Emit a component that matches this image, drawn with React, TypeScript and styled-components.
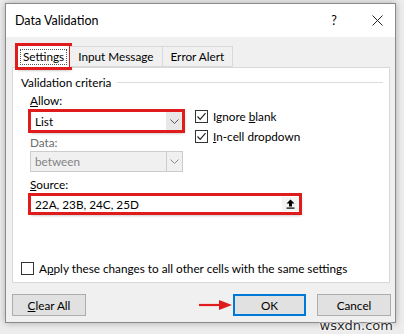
import React from 'react'
import styled, { createGlobalStyle, css } from 'styled-components'

const GlobalStyle = createGlobalStyle`
  html, body {
    margin: 0;
    padding: 0;
    background: #ededed;
  }
  body {
    font-family: Lato, "Noto Sans", sans-serif;
    font-size: 11.75px;
    color: #000;
  }
`

const RED = '#e01b1b'

const redMark = css`
  outline: 3px solid ${RED};
  outline-offset: -1px;
  box-shadow: 1px 2px 3px rgba(0, 0, 0, 0.35);
`

const Page = styled.div`
  position: relative;
  width: 404px;
  height: 334px;
  overflow: hidden;
  padding: 3px 0 0 5px;
  box-sizing: border-box;
`

const Dialog = styled.div`
  width: 391px;
  height: 320px;
  box-sizing: border-box;
  border: 1px solid #8a8a8a;
  background: #f0f0f0;
  box-shadow: 0 0 7px rgba(0, 0, 0, 0.28);
  display: flex;
  flex-direction: column;
`

const TitleBar = styled.div`
  height: 33px;
  background: #fff;
  display: flex;
  align-items: center;
  padding: 0 12px 0 9px;
  font-size: 12.5px;
`

const Title = styled.span`
  flex: 1;
`

const Help = styled.span`
  width: 16px;
  text-align: center;
  margin-right: 30px;
`

const Body = styled.div`
  flex: 1;
  padding: 7px 5px 0 6px;
  display: flex;
  flex-direction: column;
`

const Tabs = styled.div`
  display: flex;
  align-items: flex-end;
  height: 23px;
  padding-left: 5px;
  position: relative;
  z-index: 1;
`

const Tab = styled.div<{ $active?: boolean }>`
  height: ${p => (p.$active ? '23px' : '21px')};
  box-sizing: border-box;
  padding: 0 ${p => (p.$active ? '2px' : '8px')};
  display: flex;
  align-items: center;
  border: 1px solid #d9d9d9;
  border-bottom: ${p => (p.$active ? '1px solid #fff' : '1px solid #d9d9d9')};
  border-left-width: ${p => (p.$active ? '1px' : '0')};
  background: ${p => (p.$active ? '#fff' : '#f0f0f0')};
  margin-bottom: ${p => (p.$active ? '-1px' : '0')};
  ${p => p.$active && redMark}
`

const FocusLabel = styled.span`
  border: 1px dotted #555;
  padding: 0 2px;
  line-height: 14px;
`

const Panel = styled.div`
  height: 216px;
  box-sizing: border-box;
  background: #fff;
  border: 1px solid #d9d9d9;
  padding: 7px 6px 7px 8px;
  display: flex;
  flex-direction: column;
`

const Legend = styled.div`
  display: flex;
  align-items: center;
  gap: 6px;
  height: 14px;
  &::after {
    content: '';
    flex: 1;
    border-top: 1px solid #dcdcdc;
  }
`

const Criteria = styled.div`
  display: grid;
  grid-template-columns: 153px auto;
  column-gap: 12px;
  margin: 5px 0 0 9px;
`

const FieldLabel = styled.div<{ $disabled?: boolean; $gap?: number }>`
  grid-column: 1;
  height: 14px;
  line-height: 14px;
  margin-top: ${p => p.$gap ?? 0}px;
  color: ${p => (p.$disabled ? '#6d6d6d' : '#000')};
  u {
    text-decoration-thickness: 1px;
  }
`

const Select = styled.div<{ $disabled?: boolean; $marked?: boolean; $gap?: number }>`
  grid-column: 1;
  height: ${p => (p.$disabled ? 21 : 20)}px;
  margin-top: ${p => p.$gap ?? 0}px;
  box-sizing: border-box;
  border: 1px solid ${p => (p.$disabled ? '#cccccc' : '#7a7a7a')};
  background: ${p => (p.$disabled ? '#f0f0f0' : '#fff')};
  color: ${p => (p.$disabled ? '#838383' : '#000')};
  display: flex;
  align-items: stretch;
  ${p => p.$marked && redMark}
`

const SelectValue = styled.span`
  flex: 1;
  display: flex;
  align-items: center;
  padding-left: 4px;
`

const Caret = styled.span<{ $disabled?: boolean }>`
  width: 15px;
  display: flex;
  align-items: center;
  justify-content: center;
  background: ${p => (p.$disabled ? '#f0f0f0' : '#e8e8e8')};
  border-left: 1px solid ${p => (p.$disabled ? '#cccccc' : '#e8e8e8')};
`

const Checks = styled.div`
  grid-column: 2;
  grid-row: 2 / span 3;
  display: flex;
  flex-direction: column;
  gap: 7px;
  padding-top: 2px;
`

const CheckRow = styled.label`
  display: flex;
  align-items: center;
  gap: 5px;
  height: 13px;
  white-space: nowrap;
`

const Box = styled.span`
  width: 13px;
  height: 13px;
  box-sizing: border-box;
  border: 1px solid #333;
  background: #fff;
  display: flex;
  align-items: center;
  justify-content: center;
`

const SourceBlock = styled.div`
  margin-left: 9px;
`

const SourceInput = styled.div`
  width: 270px;
  height: 18px;
  margin-top: 3px;
  box-sizing: border-box;
  border: 1px solid #7a7a7a;
  display: flex;
  align-items: center;
  padding-left: 4px;
  ${redMark}
`

const SourceText = styled.span`
  flex: 1;
`

const PickButton = styled.span`
  width: 16px;
  height: 14px;
  display: flex;
  align-items: center;
  justify-content: center;
  background: #f4f4f4;
  margin-right: 1px;
`

const ApplyRow = styled(CheckRow)`
  margin-top: auto;
`

const ButtonRow = styled.div`
  display: flex;
  align-items: center;
  margin: 11px -1px 0 0;
`

const Button = styled.button<{ $default?: boolean }>`
  width: ${p => (p.$default ? 73 : 74)}px;
  height: 22px;
  box-sizing: border-box;
  font: inherit;
  color: #000;
  background: #e1e1e1;
  border: ${p => (p.$default ? '2px solid #0078d7' : '1px solid #adadad')};
  padding: 0;
  margin-left: ${p => (p.$default ? 0 : 11)}px;
  &:first-child {
    margin-left: 0;
  }
`

const Spacer = styled.div`
  flex: 1;
`

const Pointer = styled.svg`
  margin-right: 1px;
`

const Watermark = styled.div`
  position: absolute;
  right: 11px;
  bottom: 1px;
  font-family: "DejaVu Sans", sans-serif;
  font-size: 13px;
  color: #2a2a2a;
  text-shadow: 0 0 2px #fff, 0 0 2px #fff, 0 0 2px #fff;
`

const CaretIcon = ({ color = '#555' }: { color?: string }) => (
  <svg width="9" height="5" viewBox="0 0 9 5">
    <path d="M0.5 0.5 L4.5 4.5 L8.5 0.5" fill="none" stroke={color} strokeWidth="1" />
  </svg>
)

const CheckIcon = () => (
  <svg width="11" height="11" viewBox="0 0 11 11">
    <path d="M1.5 5.5 L4.2 8.3 L9.5 2.2" fill="none" stroke="#222" strokeWidth="1.2" />
  </svg>
)

const App = () => (
  <>
    <GlobalStyle />
    <Page>
      <Dialog>
        <TitleBar>
          <Title>Data Validation</Title>
          <Help>?</Help>
          <svg width="11" height="11" viewBox="0 0 11 11">
            <path d="M0.5 0.5 L10.5 10.5 M10.5 0.5 L0.5 10.5" stroke="#222" strokeWidth="1" />
          </svg>
        </TitleBar>
        <Body>
          <Tabs>
            <Tab $active>
              <FocusLabel>Settings</FocusLabel>
            </Tab>
            <Tab>Input Message</Tab>
            <Tab>Error Alert</Tab>
          </Tabs>
          <Panel>
            <Legend>Validation criteria</Legend>
            <Criteria>
              <FieldLabel>
                <u>A</u>llow:
              </FieldLabel>
              <Select $marked $gap={3}>
                <SelectValue>List</SelectValue>
                <Caret>
                  <CaretIcon />
                </Caret>
              </Select>
              <FieldLabel $disabled $gap={5}>Data:</FieldLabel>
              <Select $disabled $gap={1}>
                <SelectValue>between</SelectValue>
                <Caret $disabled>
                  <CaretIcon color="#8a8a8a" />
                </Caret>
              </Select>
              <Checks>
                <CheckRow>
                  <Box>
                    <CheckIcon />
                  </Box>
                  <span>
                    Ignore <u>b</u>lank
                  </span>
                </CheckRow>
                <CheckRow>
                  <Box>
                    <CheckIcon />
                  </Box>
                  <span>
                    <u>I</u>n-cell dropdown
                  </span>
                </CheckRow>
              </Checks>
            </Criteria>
            <SourceBlock>
              <FieldLabel $gap={6}>
                <u>S</u>ource:
              </FieldLabel>
              <SourceInput>
                <SourceText>22A, 23B, 24C, 25D</SourceText>
                <PickButton>
                  <svg width="9" height="10" viewBox="0 0 9 10">
                    <path d="M4.5 0.5 L8.5 4.5 L6 4.5 L6 7.5 L3 7.5 L3 4.5 L0.5 4.5 Z" fill="#000" />
                    <rect x="0.5" y="8.5" width="8" height="1.2" fill="#000" />
                  </svg>
                </PickButton>
              </SourceInput>
            </SourceBlock>
            <ApplyRow>
              <Box />
              <span>
                A<u>p</u>ply these changes to all other cells with the same settings
              </span>
            </ApplyRow>
          </Panel>
          <ButtonRow>
            <Button>
              <u>C</u>lear All
            </Button>
            <Spacer />
            <Pointer width="33" height="12" viewBox="0 0 33 12">
              <path d="M0 6 L22 6" stroke={RED} strokeWidth="2.2" />
              <path d="M20 1 L33 6 L20 11 Z" fill={RED} />
            </Pointer>
            <Button $default>OK</Button>
            <Button>Cancel</Button>
          </ButtonRow>
        </Body>
      </Dialog>
      <Watermark>wsxdn.com</Watermark>
    </Page>
  </>
)

export default App
